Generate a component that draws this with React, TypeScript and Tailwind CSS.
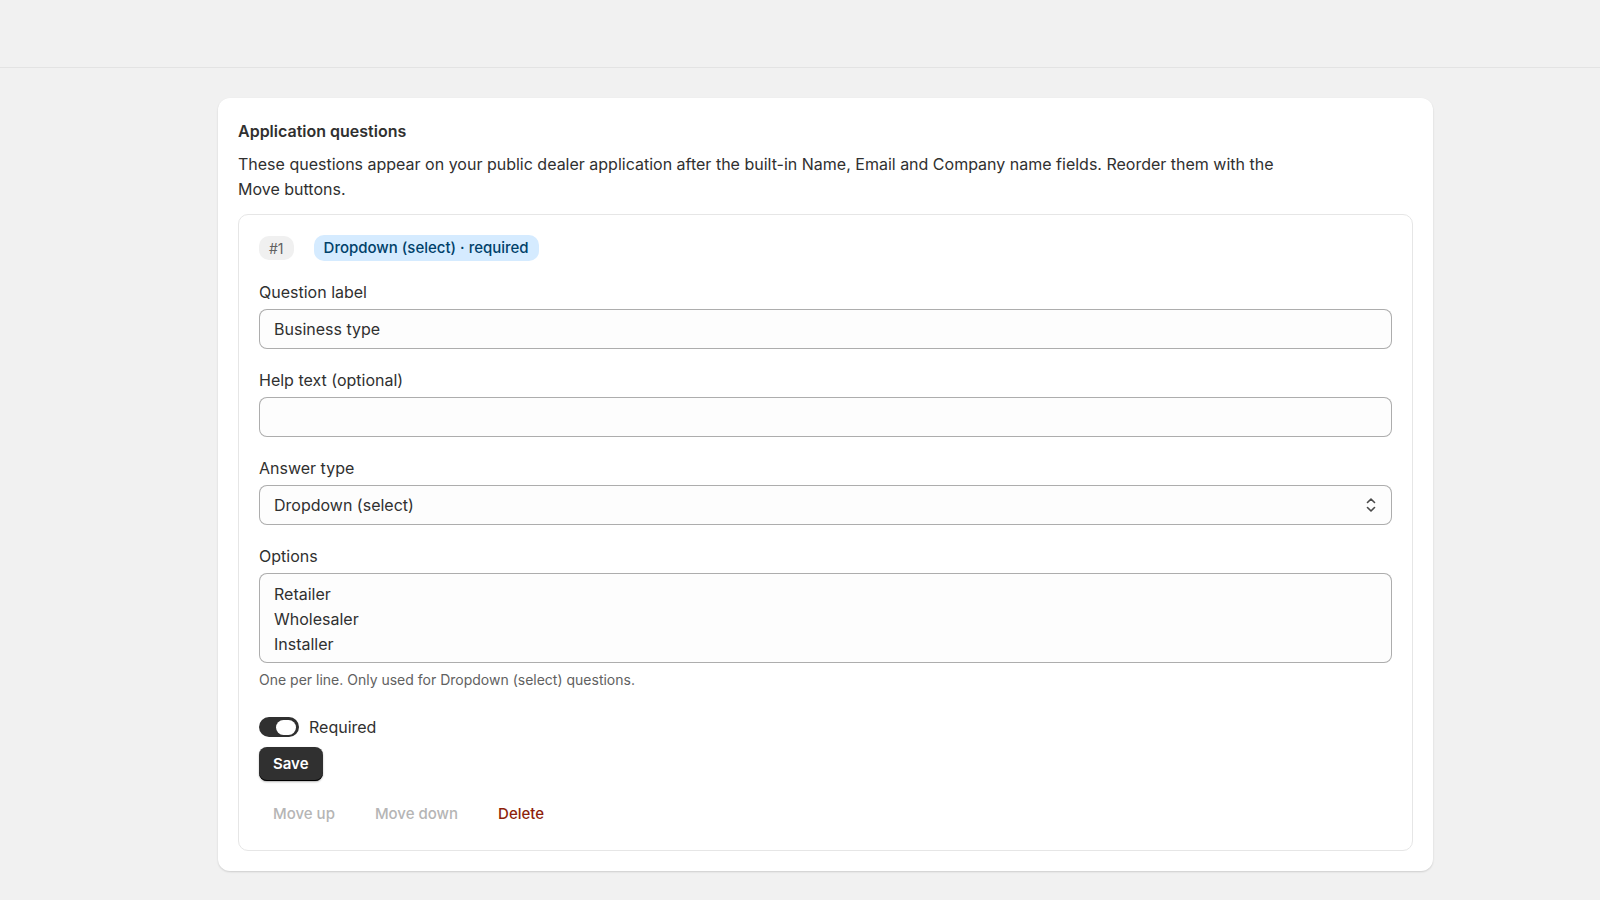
export default function App() {
  const font = { fontFamily: "Inter, 'Liberation Sans', sans-serif" };
  const input =
    "w-full h-[40px] rounded-[8px] border border-[#8a8a8a]/70 bg-[#fdfdfd] px-[14px] text-[16px] text-[#303030] flex items-center";
  const label = "text-[16px] text-[#303030] mb-[7px] leading-[20px]";
  return (
    <div className="min-h-[900px] bg-[#f1f1f1]" style={font}>
      <div className="h-[68px] border-b border-[#e3e3e3]" />
      <div className="pt-[30px] pl-[218px]">
        <div className="w-[1215px] bg-white rounded-[12px] shadow-[0_1px_2px_rgba(0,0,0,0.15)] p-[20px]">
          <div className="text-[16px] font-semibold text-[#303030] leading-[24px] mt-[1px]">Application questions</div>
          <p className="mt-[9px] text-[16px] leading-[25px] text-[#303030] max-w-[1075px]">
            These questions appear on your public dealer application after the built-in Name, Email and Company name fields. Reorder them with the Move buttons.
          </p>
          <div className="mt-[12px] border border-[#e6e6e6] rounded-[10px] p-[20px]">
            <div className="flex items-center gap-[20px]">
              <span className="rounded-[10px] bg-[#f0f0f0] px-[10px] h-[24px] flex items-center text-[14px] text-[#616161]">#1</span>
              <span className="rounded-[10px] bg-[#d5ebff] px-[10px] h-[26px] flex items-center text-[15px] font-medium text-[#00416a]">Dropdown (select) · required</span>
            </div>
            <div className="mt-[21px]">
              <div className={label}>Question label</div>
              <div className={input}>Business type</div>
            </div>
            <div className="mt-[21px]">
              <div className={label}>Help text (optional)</div>
              <div className={input}></div>
            </div>
            <div className="mt-[21px]">
              <div className={label}>Answer type</div>
              <div className={input + " justify-between"}>
                <span>Dropdown (select)</span>
                <svg width="12" height="18" viewBox="0 0 12 18" fill="none" stroke="#4a4a4a" strokeWidth="1.6" strokeLinecap="round" strokeLinejoin="round">
                  <path d="M2.5 6.5 6 3l3.5 3.5M2.5 11.5 6 15l3.5-3.5" />
                </svg>
              </div>
            </div>
            <div className="mt-[21px]">
              <div className={label}>Options</div>
              <div className="w-full h-[90px] rounded-[8px] border border-[#8a8a8a]/70 bg-[#fdfdfd] px-[14px] py-[8px] text-[16px] leading-[25px] text-[#303030]">
                <div>Retailer</div>
                <div>Wholesaler</div>
                <div>Installer</div>
              </div>
              <div className="mt-[6px] text-[14px] text-[#616161]">One per line. Only used for Dropdown (select) questions.</div>
            </div>
            <div className="mt-[25px] flex items-center gap-[10px]">
              <div className="w-[40px] h-[20px] rounded-full bg-[#303030] flex items-center justify-end pr-[3px]">
                <div className="w-[20px] h-[15px] rounded-full bg-white" />
              </div>
              <span className="text-[16px] text-[#303030]">Required</span>
            </div>
            <button className="mt-[8px] h-[34px] px-[14px] rounded-[8px] bg-[#303030] text-white text-[15px] font-semibold shadow-[inset_0_-1px_0_#000,0_1px_2px_rgba(0,0,0,0.3)]">Save</button>
            <div className="mt-[22px] flex items-center gap-[40px] pl-[14px] text-[15px] font-medium pb-[4px]">
              <span className="text-[#b5b5b5]">Move up</span>
              <span className="text-[#b5b5b5]">Move down</span>
              <span className="text-[#8e1f0b]">Delete</span>
            </div>
          </div>
        </div>
      </div>
    </div>
  );
}
